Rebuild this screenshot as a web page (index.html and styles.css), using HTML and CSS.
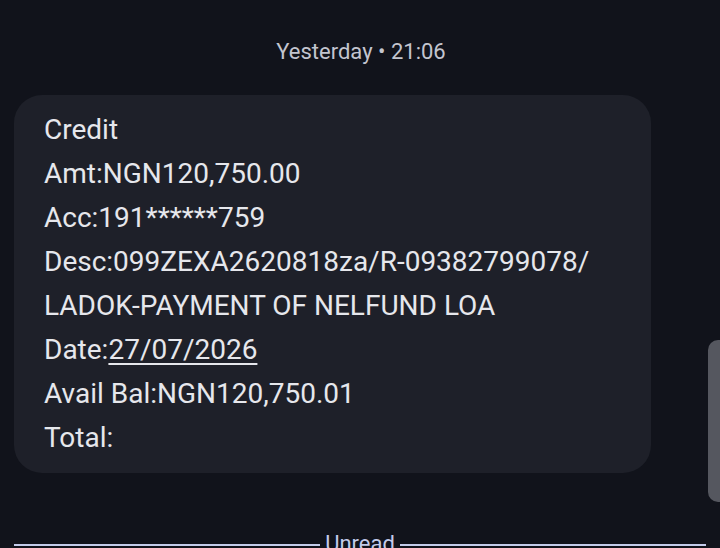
FILE: index.html
```html
<!DOCTYPE html>
<html>
<head>
<meta charset="utf-8">
<link rel="stylesheet" href="styles.css">
</head>
<body>
<div class="screen">
  <div class="stamp">Yesterday • 21:06</div>
  <div class="row">
    <div class="bubble">
      <div class="line">Credit</div>
      <div class="line">Amt:NGN120,750.00</div>
      <div class="line">Acc:191******759</div>
      <div class="line">Desc:099ZEXA2620818za/R-09382799078/</div>
      <div class="line">LADOK-PAYMENT OF NELFUND LOA</div>
      <div class="line">Date:<span class="link">27/07/2026</span></div>
      <div class="line">Avail Bal:NGN120,750.01</div>
      <div class="line">Total:</div>
    </div>
  </div>
  <div class="divider">
    <span class="rule"></span>
    <span class="label">Unread</span>
    <span class="rule"></span>
  </div>
  <div class="scroll"></div>
</div>
</body>
</html>
```
FILE: styles.css
```css
html, body {
  margin: 0;
  padding: 0;
  background: #11131b;
}
.screen {
  position: relative;
  width: 720px;
  height: 548px;
  overflow: hidden;
  font-family: Roboto, "Noto Sans", sans-serif;
  color: #e3e4ea;
}
.stamp {
  padding-top: 37px;
  height: 29px;
  text-align: center;
  font-size: 22px;
  line-height: 29px;
  color: #c3c5cf;
  padding-left: 2px;
}
.row {
  padding: 29px 0 0 14px;
}
.bubble {
  width: 637px;
  box-sizing: border-box;
  background: #1e2029;
  border-radius: 28px;
  padding: 13px 20px 13px 30px;
}
.line {
  font-size: 28px;
  line-height: 44px;
  height: 44px;
  white-space: nowrap;
  color: #e6e7ec;
}
.link {
  text-decoration: underline;
  text-underline-offset: 4px;
  text-decoration-thickness: 2px;
}
.divider {
  display: flex;
  align-items: flex-start;
  padding: 58px 14px 0 14px;
  gap: 5px;
}
.rule {
  flex: 1;
  height: 2px;
  background: #c3cbea;
  margin-top: 13px;
}
.label {
  font-size: 22px;
  line-height: 26px;
  color: #c3cbea;
}
.scroll {
  position: absolute;
  right: 0;
  top: 340px;
  width: 12px;
  height: 162px;
  background: #55575f;
  border-radius: 10px 0 0 10px;
}
```
